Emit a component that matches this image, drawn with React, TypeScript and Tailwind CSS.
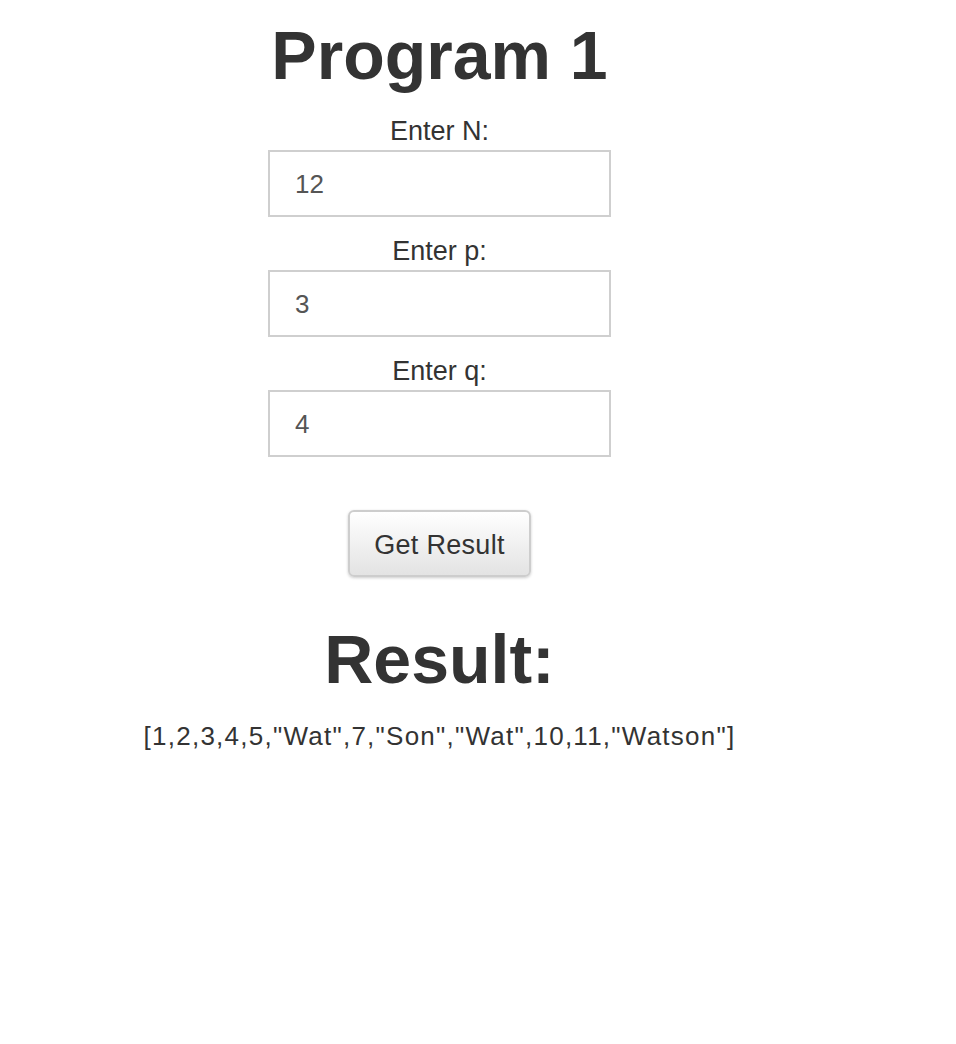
import { useState } from 'react';

function Field({ label, value, onChange }: { label: string; value: string; onChange: (v: string) => void }) {
  return (
    <div className="flex flex-col items-center">
      <label className="text-[27px] leading-[30px] text-[#333]">{label}</label>
      <input
        value={value}
        onChange={e => onChange(e.target.value)}
        className="mt-[4px] h-[67px] w-[343px] border-2 border-[#cfcfcf] bg-white px-[25px] pt-[2px] text-[26px] text-[#555] outline-none"
      />
    </div>
  );
}

export default function App() {
  const [n, setN] = useState('12');
  const [p, setP] = useState('3');
  const [q, setQ] = useState('4');

  return (
    <div className="min-h-[1044px] bg-white font-['Liberation_Sans',Arial,sans-serif] text-[#333]">
      <div className="flex w-[879px] flex-col items-center pt-[18px] text-center">
        <h1 className="text-[68px] font-bold leading-[75px]">Program 1</h1>

        <div className="mt-[23px] flex flex-col gap-[19px]">
          <Field label="Enter N:" value={n} onChange={setN} />
          <Field label="Enter p:" value={p} onChange={setP} />
          <Field label="Enter q:" value={q} onChange={setQ} />
        </div>

        <button className="mt-[53px] h-[67px] w-[183px] rounded-[6px] border-2 border-[#cdcdcd] bg-gradient-to-b from-white to-[#e3e3e3] pt-[3px] text-[27px] tracking-[0.3px] text-[#333] shadow-[0_1px_3px_rgba(0,0,0,0.2)]">
          Get Result
        </button>

        <h2 className="mt-[45px] text-[68px] font-bold leading-[75px]">Result:</h2>
        <p className="mt-[24px] text-[26px] leading-[30px] tracking-[1.25px]">[1,2,3,4,5,"Wat",7,"Son","Wat",10,11,"Watson"]</p>
      </div>
    </div>
  );
}
